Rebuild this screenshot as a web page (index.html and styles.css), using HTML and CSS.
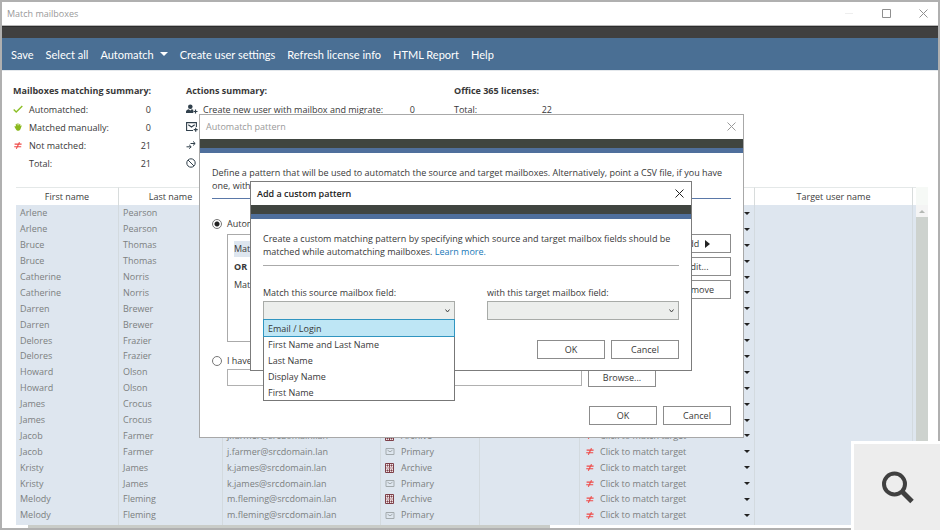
FILE: index.html
```html
<!DOCTYPE html>
<html lang="en">
<head>
<meta charset="utf-8">
<title>Match mailboxes</title>
<link rel="stylesheet" href="styles.css">
</head>
<body>
<svg class="defs" aria-hidden="true">
  <symbol id="i-check" viewBox="0 0 10 8"><path d="M.7 4.6 3.2 7 9.3 1" fill="none" stroke="#8cbf26" stroke-width="1.4"/></symbol>
  <symbol id="i-hand" viewBox="0 0 8 8"><path d="M.3 3.6 1.6 3 2 4.2 1.7 1.1l.9-.3.6 2L3.5.3h.9l.3 2.4L5.6.8l.8.4-.3 2 .9-.9.7.5-.9 2.5C6.400 6.900 5.700 7.800 4.500 7.800 3.100 7.800 2.500 7.300 2 6.400z" fill="#8ab81c"/></symbol>
  <symbol id="i-neq" viewBox="0 0 8 7"><path d="M.6 2.100H7.600M.2 4.700H7.200M5.500.2 2.300 6.800" fill="none" stroke="#ee4a48" stroke-width="1.100"/></symbol>
  <symbol id="i-user" viewBox="0 0 12 10"><circle cx="4.300" cy="2.800" r="2.300" fill="#31404c"/><path d="M0 9V7.600C0 6 1.600 5.500 2.800 5.200L4.300 6.600 5.800 5.200 7.300 5.800V9z" fill="#31404c"/><path d="M9.500 5.500v4M7.500 7.500h4" stroke="#31404c" stroke-width="1.200"/></symbol>
  <symbol id="i-mailplus" viewBox="0 0 12 10"><path d="M7 8.500H.6V.6H10.400V5M2.300 2.700 5.500 5 8.700 2.700" fill="none" stroke="#31404c" stroke-width="1.100"/><path d="M9.700 5.700v4M7.700 7.700h4" stroke="#31404c" stroke-width="1.200"/></symbol>
  <symbol id="i-arrows" viewBox="0 0 10 8"><path d="M4.500 2.500H9M7 .4 9.200 2.500 7 4.500M.5 5.800H5M3.200 3.900 5.200 5.800 3.200 7.700" fill="none" stroke="#31404c"/></symbol>
  <symbol id="i-ban" viewBox="0 0 10 10"><circle cx="5" cy="5" r="4.200" fill="none" stroke="#31404c"/><path d="M2 2 8 8" stroke="#31404c"/></symbol>
  <symbol id="i-mail" viewBox="0 0 9 7"><path d="M.5.5h8v6h-8zM2 2.200 4.500 3.800 7 2.200" fill="none" stroke="#a3aaad"/></symbol>
  <symbol id="i-archive" viewBox="0 0 10 10"><path d="M.5.500h8v9h-8zM4.500 1v8" fill="#f0e4e6" stroke="#7d3f48"/><path d="M1 5h7" stroke="#b58a90"/><path d="M1.500 2.500h2M5.500 2.500h2M1.500 7.500h2M5.500 7.500h2M2.500 1.500v2M6.500 1.500v2M2.500 6.500v2M6.500 6.500v2" stroke="#7d3f48"/></symbol>
  <symbol id="i-folder" viewBox="0 0 12 10"><path d="M0 .5h5l1 1.200h6V10H0z" fill="#ecc067"/></symbol>
  <symbol id="i-down" viewBox="0 0 6 3"><path d="M0 0h6L3 3z" fill="currentColor"/></symbol>
  <symbol id="i-close" viewBox="0 0 9 9"><path d="M.5.5l8 8M8.500.5l-8 8" stroke="currentColor" fill="none"/></symbol>
</svg>

<main class="window">
  <header class="titlebar">
    <h1>Match mailboxes</h1>
    <div class="controls">
      <button aria-label="Minimize" class="faint"><svg width="9" height="9"><path d="M0 4.500h8" stroke="currentColor"/></svg></button>
      <button aria-label="Maximize"><svg width="9" height="9"><path d="M.5.5h8v8h-8z" fill="none" stroke="currentColor"/></svg></button>
      <button aria-label="Close"><svg width="9" height="9"><use href="#i-close"/></svg></button>
    </div>
  </header>
  <div class="band"></div>
  <nav class="toolbar">
    <button>Save</button>
    <button>Select all</button>
    <button>Automatch <svg width="8" height="4"><use href="#i-down"/></svg></button>
    <button>Create user settings</button>
    <button>Refresh license info</button>
    <button>HTML Report</button>
    <button>Help</button>
  </nav>

  <div class="summaries">
    <section class="summary matching">
      <h2>Mailboxes matching summary:</h2>
      <dl>
        <div><dt><svg width="10" height="8"><use href="#i-check"/></svg>Automatched:</dt><dd>0</dd></div>
        <div><dt><svg width="10" height="8"><use href="#i-hand"/></svg>Matched manually:</dt><dd>0</dd></div>
        <div><dt><svg width="10" height="7"><use href="#i-neq"/></svg>Not matched:</dt><dd>21</dd></div>
        <div><dt><svg width="10" height="8"></svg>Total:</dt><dd>21</dd></div>
      </dl>
    </section>
    <section class="summary actions">
      <h2>Actions summary:</h2>
      <dl>
        <div><dt><svg width="12" height="10"><use href="#i-user"/></svg>Create new user with mailbox and migrate:</dt><dd>0</dd></div>
        <div><dt><svg width="12" height="10"><use href="#i-mailplus"/></svg></dt></div>
        <div><dt><svg width="10" height="8"><use href="#i-arrows"/></svg></dt></div>
        <div><dt><svg width="10" height="10"><use href="#i-ban"/></svg></dt></div>
      </dl>
    </section>
    <section class="summary licenses">
      <h2>Office 365 licenses:</h2>
      <dl><div><dt>Total:</dt><dd>22</dd></div></dl>
    </section>
  </div>

  <div class="grid">
    <div class="viewport">
      <table>
        <colgroup><col class="c1"><col class="c2"><col class="c3"><col class="c4"><col class="c5"><col class="c6"><col class="c7"><col class="c8"></colgroup>
        <thead><tr><th>First name</th><th>Last name</th><th></th><th></th><th></th><th></th><th>Target user name</th><th></th></tr></thead>
        <tbody id="rows"></tbody>
      </table>
    </div>
    <div class="vscroll"><button aria-label="Scroll up"><svg width="6" height="3"><path d="M0 3h6L3 0z" fill="#b4b8b4"/></svg></button></div>
  </div>
  <div class="hscroll"></div>
</main>

<section class="dialog pattern" role="dialog" aria-labelledby="t1">
  <header><h2 id="t1">Automatch pattern</h2><button aria-label="Close"><svg width="9" height="9"><use href="#i-close"/></svg></button></header>
  <div class="strip"></div>
  <div class="content">
    <p>Define a pattern that will be used to automatch the source and target mailboxes. Alternatively, point a CSV file, if you have one, with the mailboxes already matched in the list.</p>
    <hr>
    <label class="choice"><input type="radio" name="mode" checked>Automatch</label>
    <div class="patterns">
      <ul class="list"><li class="on">Match</li><li class="or">OR</li><li>Match</li></ul>
      <div class="side">
        <button class="btn">Add <svg width="6" height="8"><path d="M0 0v8l5-4z" fill="#222"/></svg></button>
        <button class="btn">Edit...</button>
        <button class="btn">Remove</button>
      </div>
    </div>
    <label class="choice"><input type="radio" name="mode">I have</label>
    <div class="file"><input type="text" aria-label="CSV file"><button class="btn">Browse...</button></div>
    <footer><button class="btn">OK</button><button class="btn">Cancel</button></footer>
  </div>
</section>

<section class="dialog custom" role="dialog" aria-labelledby="t2">
  <header><h2 id="t2">Add a custom pattern</h2><button aria-label="Close"><svg width="9" height="9"><use href="#i-close"/></svg></button></header>
  <div class="strip"></div>
  <div class="content">
    <p>Create a custom matching pattern by specifying which source and target mailbox fields should be matched while automatching mailboxes. <a href="#">Learn more.</a></p>
    <hr>
    <div class="fields">
      <div class="field">
        <label for="src">Match this source mailbox field:</label>
        <select id="src"></select>
        <ul class="menu" role="listbox">
          <li class="on" role="option">Email / Login</li>
          <li role="option">First Name and Last Name</li>
          <li role="option">Last Name</li>
          <li role="option">Display Name</li>
          <li role="option">First Name</li>
        </ul>
      </div>
      <div class="field">
        <label for="dst">with this target mailbox field:</label>
        <select id="dst"></select>
      </div>
    </div>
    <footer><button class="btn">OK</button><button class="btn">Cancel</button></footer>
  </div>
</section>

<button class="magnify" aria-label="Zoom"><svg width="34" height="34" viewBox="0 0 34 34"><circle cx="14.500" cy="14" r="10.500" fill="none" stroke="#404040" stroke-width="4"/><path d="M22 21.500 32 31.500" stroke="#404040" stroke-width="5"/></svg></button>
<script src="rows.js"></script>
</body>
</html>
```
FILE: rows.js
```js
const people = [
  ["Arlene", "Pearson"], ["Bruce", "Thomas"], ["Catherine", "Norris"],
  ["Darren", "Brewer"], ["Delores", "Frazier"], ["Howard", "Olson"],
  ["James", "Crocus"], ["Jacob", "Farmer"], ["Kristy", "James"], ["Melody", "Fleming"]
];
const icon = (name, w, h) => `<svg width="${w}" height="${h}"><use href="#i-${name}"/></svg>`;
const row = (first, last, mail, type, match) =>
  `<tr><td>${first}</td><td>${last}</td><td>${mail}</td><td><div class="cell">${type}</div></td><td></td><td><div class="cell">${match}</div></td><td></td><td></td></tr>`;
const match = `${icon("neq", 8, 7)}<span>Click to match target</span>${icon("down", 6, 3)}`;
let html = "";
for (const [first, last] of people) {
  const mail = `${first[0]}.${last}@srcdomain.lan`.toLowerCase();
  html += row(first, last, mail, `${icon("archive", 10, 10)}<span>Archive</span>`, match);
  html += row(first, last, mail, `${icon("mail", 10, 7)}<span>Primary</span>`, match);
}
html += row("", "", "", icon("folder", 12, 10), "");
document.getElementById("rows").innerHTML = html;
```
FILE: styles.css
```css
* { box-sizing: border-box; }
body { margin: 0; font: 9px/13px "Open Sans", "Noto Sans", sans-serif; color: #383838; background: #fff; }
h1, h2, p, dl, dd, ul { margin: 0; padding: 0; font-size: inherit; }
ul { list-style: none; }
button { font: inherit; color: inherit; background: none; border: 0; padding: 0; }
svg { display: block; flex: none; }
.defs { display: none; }

.window { height: 100vh; border: 2px solid #b0b0b0; display: flex; flex-direction: column; overflow: hidden; }
.titlebar { flex: none; height: 24px; padding: 0 10px 0 5px; display: flex; align-items: center; justify-content: space-between; border-bottom: 1px solid #b8b8b8; color: #999; }
.titlebar h1 { font-weight: 400; }
.controls { display: flex; gap: 28px; color: #8f8f8f; }
.controls .faint { color: #eee; }
.band { flex: none; height: 12px; background: #404040; border-top: 1px solid #2c2c2c; }
.toolbar { flex: none; height: 33px; padding: 0 9px; display: flex; align-items: center; gap: 12px; background: #4a6f94; border-bottom: 1px solid #e4e8ec; color: #fff; font-family: Lato, "Open Sans", sans-serif; font-size: 11px; white-space: nowrap; }
.toolbar button { display: flex; align-items: center; gap: 6px; }

.summaries { flex: none; display: flex; gap: 35px; padding: 11px; height: 116px; white-space: nowrap; }
.summary h2 { line-height: 18px; font-weight: 700; }
.summary dl > div { display: flex; justify-content: space-between; height: 18px; align-items: center; }
.summary dt { display: flex; align-items: center; gap: 6px; }
.matching { width: 138px; }
.actions { width: 233px; }
.actions dd { padding-right: 4px; }
.licenses { width: 98px; }
.summary.actions dt { gap: 5px; }

.grid { flex: 1; min-height: 0; margin: 0 10px 0 14px; display: flex; }
.viewport { flex: 1; overflow: hidden; background: #dee6ef; }
table { width: 100%; height: 352px; table-layout: fixed; border-collapse: separate; border-spacing: 0; color: #7c8080; line-height: 14px; }
th { height: 18px; padding: 0; background: #fff; border-right: 1px solid #d8dcdc; border-top: 1px solid #e4e8e8; color: #404040; font-weight: 400; }
td { height: 15px; padding: 1px 0 0 4px; border-right: 1px solid #d3dadf; white-space: nowrap; }
th:last-child, td:last-child { border-right: 0; }
.c1 { width: 103px; }
.c2 { width: 104px; }
.c3 { width: 158px; }
.c4 { width: 99px; }
.c5 { width: 100px; }
.c6 { width: 175px; }
.c8 { width: 3px; }
td:last-child { padding: 0; }
.cell { display: flex; align-items: center; gap: 6px; }
.cell > span { flex: 1; }
td:nth-child(6) .cell { padding: 0 4px 0 2px; }
td:nth-child(6) svg:last-child { color: #222; }
.vscroll { width: 12px; background: #cdd2ce; border-top: 18px solid #f6f9f6; }
.vscroll button { width: 12px; height: 12px; display: flex; align-items: center; justify-content: center; background: #f4f4f4; }
.hscroll { flex: none; height: 3px; margin-left: 26px; width: 522px; background: #c9ccc8; }

.dialog { position: absolute; background: #fff; border: 1px solid #a8a8a8; }
.dialog header { display: flex; justify-content: space-between; align-items: center; height: 24px; padding: 0 7px 2px 6px; }
.strip { height: 14px; background: #404540; border-bottom: 5px solid #4f6f9c; }
.dialog .content { padding: 13px 12px; }
.dialog hr { border: 0; border-top: 1px solid #aaa; margin: 0; }
.pattern { left: 199px; top: 114px; width: 545px; height: 324px; }
.pattern header { color: #999; }
.pattern header h2 { font-weight: 400; }
.pattern hr { border-color: #5a78a8; margin: 6px 0 18px; }
.btn { width: 68px; height: 19px; border: 1px solid #8c8c8c; background: #fff; display: flex; align-items: center; justify-content: center; gap: 6px; }
.choice { display: flex; align-items: center; gap: 5px; height: 13px; }
.choice input { appearance: none; width: 10px; height: 10px; margin: 0; border: 1px solid #777; border-radius: 50%; }
.choice input:checked { background: radial-gradient(circle, #222 2px, #fff 3px); }
.patterns { display: flex; justify-content: space-between; gap: 6px; margin: 4px 0 12px 15px; }
.list { flex: 1; height: 108px; padding: 6px; border: 1px solid #aaa; }
.list li { height: 16px; line-height: 16px; margin-bottom: 2px; }
.list .on { background: #dee6ef; }
.list .or { font-weight: 700; }
.side { display: flex; flex-direction: column; gap: 4px; }
.file { display: flex; gap: 6px; margin: 1px 75px 0 15px; align-items: center; }
.file input { flex: 1; height: 17px; border: 1px solid #b0b0b0; padding: 0 4px; font: inherit; }
.dialog footer { display: flex; justify-content: flex-end; gap: 6px; }
.pattern footer { margin-top: 19px; }

.custom { left: 250px; top: 181px; width: 442px; height: 190px; border-color: #7c7c7c; }
.custom header { height: 23px; padding-bottom: 0; color: #222; }
.custom header h2 { font-weight: 600; }
.custom hr { margin: 7px 0 20px; }
.custom a { color: #1878b8; text-decoration: none; }
.fields { display: flex; gap: 32px; }
.field { flex: 1; position: relative; }
.field label { display: block; height: 15px; }
.field select { display: block; width: 100%; height: 19px; border: 1px solid #a8aba8; background: #eceeec url("data:image/svg+xml,%3Csvg xmlns='http://www.w3.org/2000/svg' width='5' height='4'%3E%3Cpath d='M.5.5 2.500 3 4.500.5' fill='none' stroke='%23444'/%3E%3C/svg%3E") no-repeat right 4px center; appearance: none; border-radius: 0; font: inherit; }
.menu { position: absolute; top: 33px; left: 0; right: 0; background: #fff; border: 1px solid #777; z-index: 2; }
.menu li { height: 16px; line-height: 16px; padding: 1px 4px 0; }
.menu .on { background: #bee6f5; box-shadow: 0 0 0 1px #3095c0; }
.custom footer { margin-top: 20px; }

.magnify { position: absolute; right: 0; bottom: 0; width: 89px; height: 89px; background: #ededed; border: solid #fff; border-width: 3px 0 0 3px; display: flex; align-items: center; justify-content: center; color: #404040; }
```
